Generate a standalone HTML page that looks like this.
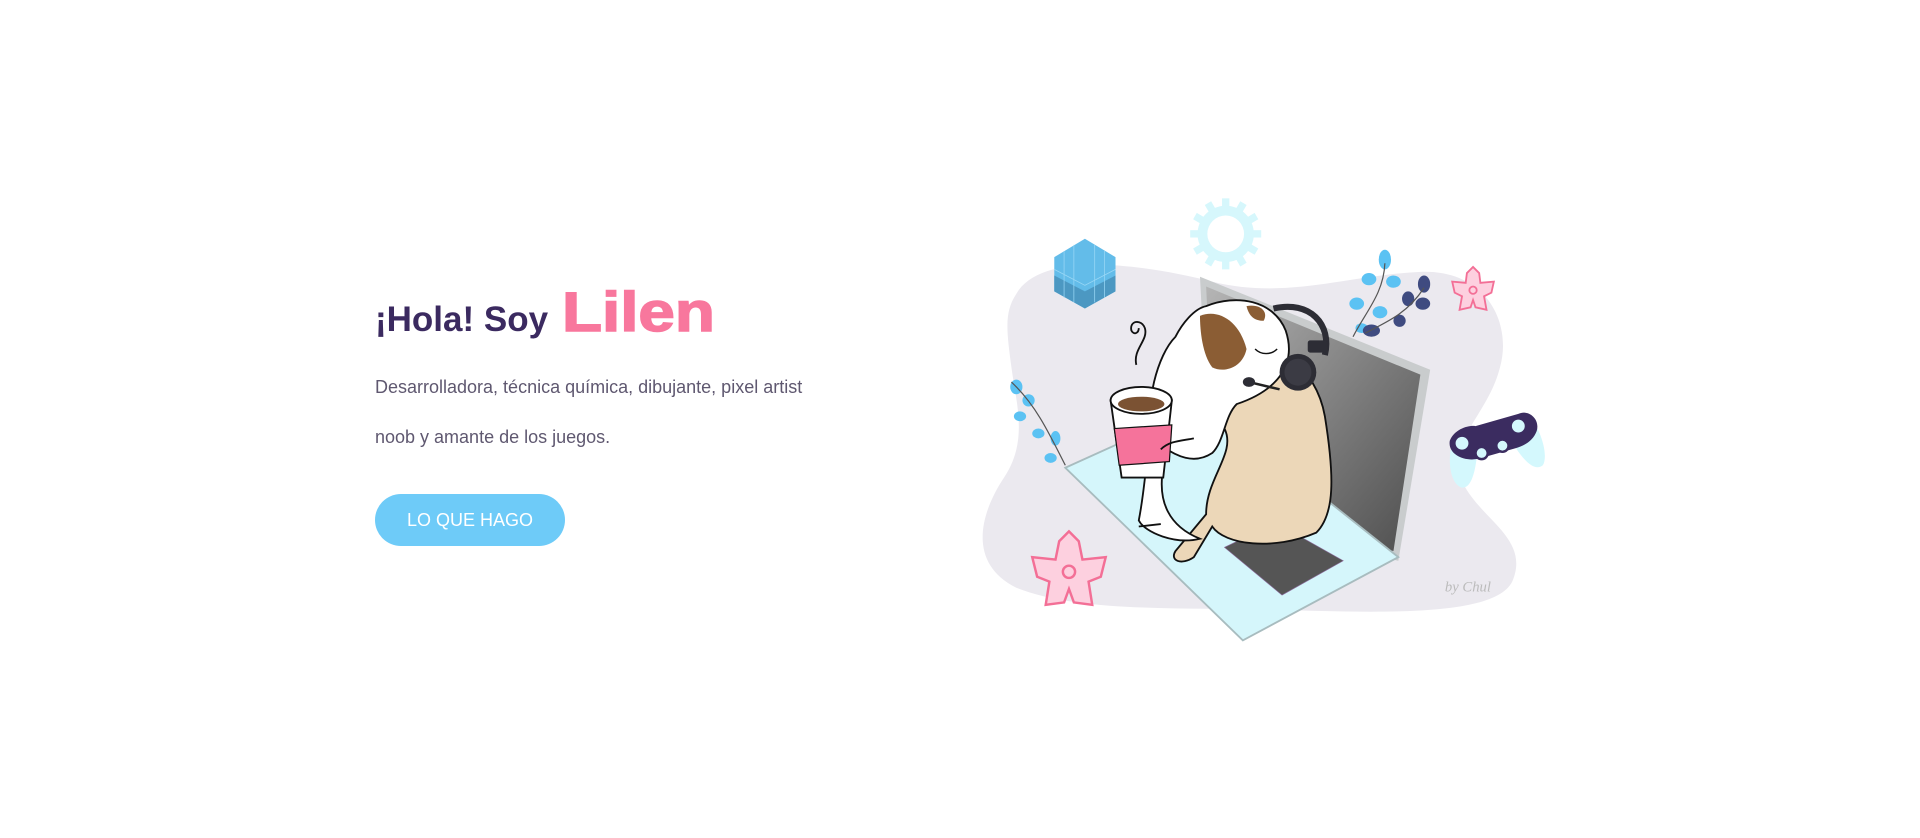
<!DOCTYPE html>
<html><head><meta charset="utf-8"><style>
html,body{margin:0;padding:0;background:#fff;width:1920px;height:838px;overflow:hidden;font-family:"Liberation Sans",Arial,sans-serif}
h1{position:absolute;left:375px;top:282px;margin:0;font-size:35px;font-weight:bold;color:#3b2a60;white-space:nowrap;line-height:60px}
h1 span{display:inline-block;font-size:56px;color:#f8779d;transform:scaleX(1.17);transform-origin:left center;-webkit-text-stroke:1.5px #f8779d;margin-left:4px}
p{position:absolute;left:375px;top:362px;margin:0;font-size:18px;line-height:50px;color:#5f5870;width:460px}
.btn{position:absolute;left:375px;top:494px;width:190px;height:52px;border-radius:26px;background:#6ecbf8;color:#fff;font-size:18px;line-height:52px;text-align:center}
svg{position:absolute;left:0;top:0}
</style></head><body>
<h1>¡Hola! Soy <span>Lilen</span></h1>
<p>Desarrolladora, técnica química, dibujante, pixel artist noob y amante de los juegos.</p>
<div class="btn">LO QUE HAGO</div>
<svg width="1920" height="838" viewBox="0 0 1568 684.4">
<defs><linearGradient id="sc" x1="0" y1="0" x2="1" y2="1"><stop offset="0" stop-color="#b5b5b5"/><stop offset="1" stop-color="#4e4e4e"/></linearGradient></defs>
<path d="M830,240 C850,205 930,215 990,230 C1050,245 1100,225 1160,222 C1215,220 1235,265 1225,300 C1215,340 1180,360 1195,395 C1210,425 1250,440 1235,475 C1220,505 1120,500 1040,498 C960,496 880,500 830,480 C790,460 800,420 820,390 C840,360 830,330 826,300 C822,270 820,255 830,240Z" fill="#ebe9ef"/>
<g transform="translate(1001,191)" fill="#d6f7fc">
<circle r="23"/>
<g id="t"><rect x="-3" y="-29" width="6" height="8"/><rect x="-3" y="21" width="6" height="8"/></g>
<use href="#t" transform="rotate(30)"/><use href="#t" transform="rotate(60)"/><use href="#t" transform="rotate(90)"/><use href="#t" transform="rotate(120)"/><use href="#t" transform="rotate(150)"/>
<circle r="15" fill="#fff"/></g>
<polygon points="886,195 911,210 911,238 886,252 861,238 861,210" fill="#63bce9"/>
<polygon points="861,225 886,238 911,225 911,238 886,252 861,238" fill="#4c98c2"/>
<g stroke="#9ad8f6" stroke-width="0.6" fill="none"><path d="M869,205 L869,243 M877,200 L877,247 M894,200 L894,247 M902,205 L902,243 M861,220 L886,233 L911,220"/></g>
<g fill="#5bc2f3"><ellipse cx="1131" cy="212" rx="5" ry="8"/><ellipse cx="1118" cy="228" rx="6" ry="5"/><ellipse cx="1138" cy="230" rx="6" ry="5"/><ellipse cx="1108" cy="248" rx="6" ry="5"/><ellipse cx="1127" cy="255" rx="6" ry="5"/><ellipse cx="1112" cy="268" rx="5" ry="4"/>
<ellipse cx="830" cy="316" rx="5" ry="6"/><ellipse cx="840" cy="327" rx="5" ry="5"/><ellipse cx="833" cy="340" rx="5" ry="4"/><ellipse cx="848" cy="354" rx="5" ry="4"/><ellipse cx="862" cy="358" rx="4" ry="6"/><ellipse cx="858" cy="374" rx="5" ry="4"/></g>
<g fill="#3f4b80"><ellipse cx="1163" cy="232" rx="5" ry="7"/><ellipse cx="1150" cy="244" rx="5" ry="6"/><ellipse cx="1162" cy="248" rx="6" ry="5"/><ellipse cx="1143" cy="262" rx="5" ry="5"/><ellipse cx="1120" cy="270" rx="7" ry="5"/></g>
<path d="M1131,215 C1130,240 1115,255 1105,275 M1163,235 C1150,255 1135,262 1115,272 M826,312 C845,330 855,350 870,380" stroke="#555" stroke-width="1" fill="none"/>
<polygon points="980,226 1168,302 1142,458 990,420" fill="#c9cccd"/>
<polygon points="985,234 1160,306 1138,450 994,416" fill="url(#sc)"/>
<polygon points="870,382 985,330 1142,455 1015,523" fill="#d5f6fb" stroke="#a8bcbf" stroke-width="1.5"/>
<polygon points="1000,447 1042,427 1097,458 1047,486" fill="#555" stroke="#8b6b9b" stroke-width="0.5"/>
<path d="M1000,290 C1040,270 1075,300 1082,340 C1090,390 1090,420 1075,435 C1040,450 1000,445 990,430 L975,455 C965,462 955,458 960,450 L985,420 C985,390 1010,370 1000,350 Z" fill="#ecd7b8" stroke="#111" stroke-width="1.5"/>
<path d="M985,250 C1010,240 1040,245 1050,270 C1060,300 1040,320 1010,330 C1000,340 1000,360 990,370 C975,380 960,372 950,365 L950,382 C945,410 955,430 980,440 C960,445 935,435 930,425 C935,400 935,380 940,360 C935,330 945,290 960,275 C965,265 975,252 985,250Z" fill="#fff" stroke="#111" stroke-width="1.5"/>
<path d="M980,258 C995,252 1012,262 1018,285 C1015,300 1000,305 990,300 C982,290 980,270 980,258Z" fill="#8b5d34"/>
<path d="M1018,250 C1030,248 1036,255 1032,262 C1024,262 1020,258 1018,250Z" fill="#8b5d34"/>
<path d="M1040,252 C1070,245 1088,265 1082,290" stroke="#2d2d35" stroke-width="5" fill="none"/>
<rect x="1068" y="278" width="16" height="10" rx="2" fill="#2d2d35"/>
<circle cx="1060" cy="304" r="15" fill="#2d2d35"/><circle cx="1060" cy="304" r="11" fill="#3b3b44"/>
<path d="M1020,312 L1045,318" stroke="#222" stroke-width="2"/><ellipse cx="1020" cy="312" rx="5" ry="4" fill="#2d2d35"/>
<path d="M1025,285 C1030,290 1038,290 1043,285" stroke="#111" stroke-width="1.2" fill="none"/>
<path d="M907,327 L957,327 L950,390 L916,390 Z" fill="#fff" stroke="#111" stroke-width="1.5"/>
<ellipse cx="932" cy="327" rx="25" ry="11" fill="#fff" stroke="#111" stroke-width="1.5"/>
<ellipse cx="932" cy="330" rx="19" ry="6" fill="#7b5233"/>
<path d="M910,350 L957,347 L955,377 L914,380 Z" fill="#f5739b" stroke="#111" stroke-width="1"/>
<path d="M928,298 C925,285 938,278 935,268 C932,260 922,262 924,270 C926,274 930,272 930,268" stroke="#111" stroke-width="1.5" fill="none"/>
<path d="M948,367 C955,360 965,360 975,358 M930,430 L948,428" stroke="#111" stroke-width="1.5" fill="none"/>
<g transform="translate(873,467)" fill="#fdd0df" stroke="#f36f96" stroke-width="2">
<path d="M0,-33 L8,-25 L11,-10 L30,-12 L26,4 L16,8 L19,27 L4,25 L0,14 L-4,25 L-19,27 L-16,8 L-26,4 L-30,-12 L-11,-10 L-8,-25 Z"/>
<circle r="5" fill="none"/></g>
<g transform="translate(1203,237)" fill="#fdd0df" stroke="#f36f96" stroke-width="1.5">
<path d="M0,-19 L5,-14 L6,-6 L17,-7 L15,2 L9,5 L11,16 L2,14 L0,8 L-2,14 L-11,16 L-9,5 L-15,2 L-17,-7 L-6,-6 L-5,-14 Z"/>
<circle r="3" fill="none"/></g>
<path d="M1186,362 C1190,350 1240,336 1250,342 C1258,350 1265,372 1260,380 C1254,385 1246,378 1238,366 L1206,374 C1204,390 1200,400 1193,398 C1184,394 1182,375 1186,362Z" fill="#d4f8fd"/>
<path d="M1184,360 C1188,350 1200,347 1205,348 L1240,338 C1248,334 1258,342 1255,352 C1252,360 1245,364 1238,366 L1210,374 C1198,378 1182,372 1184,360Z" fill="#3b2c60"/>
<circle cx="1194" cy="362" r="6" fill="#d4f8fd" stroke="#3b2c60" stroke-width="1.5"/><circle cx="1240" cy="348" r="6" fill="#d4f8fd" stroke="#3b2c60" stroke-width="1.5"/>
<circle cx="1210" cy="370" r="5" fill="#d4f8fd" stroke="#3b2c60" stroke-width="2"/><circle cx="1227" cy="364" r="5" fill="#d4f8fd" stroke="#3b2c60" stroke-width="2"/>
<text x="1180" y="483" font-family="Liberation Serif,serif" font-style="italic" font-size="12" fill="#bbb">by Chul</text>
</svg>
</body></html>
